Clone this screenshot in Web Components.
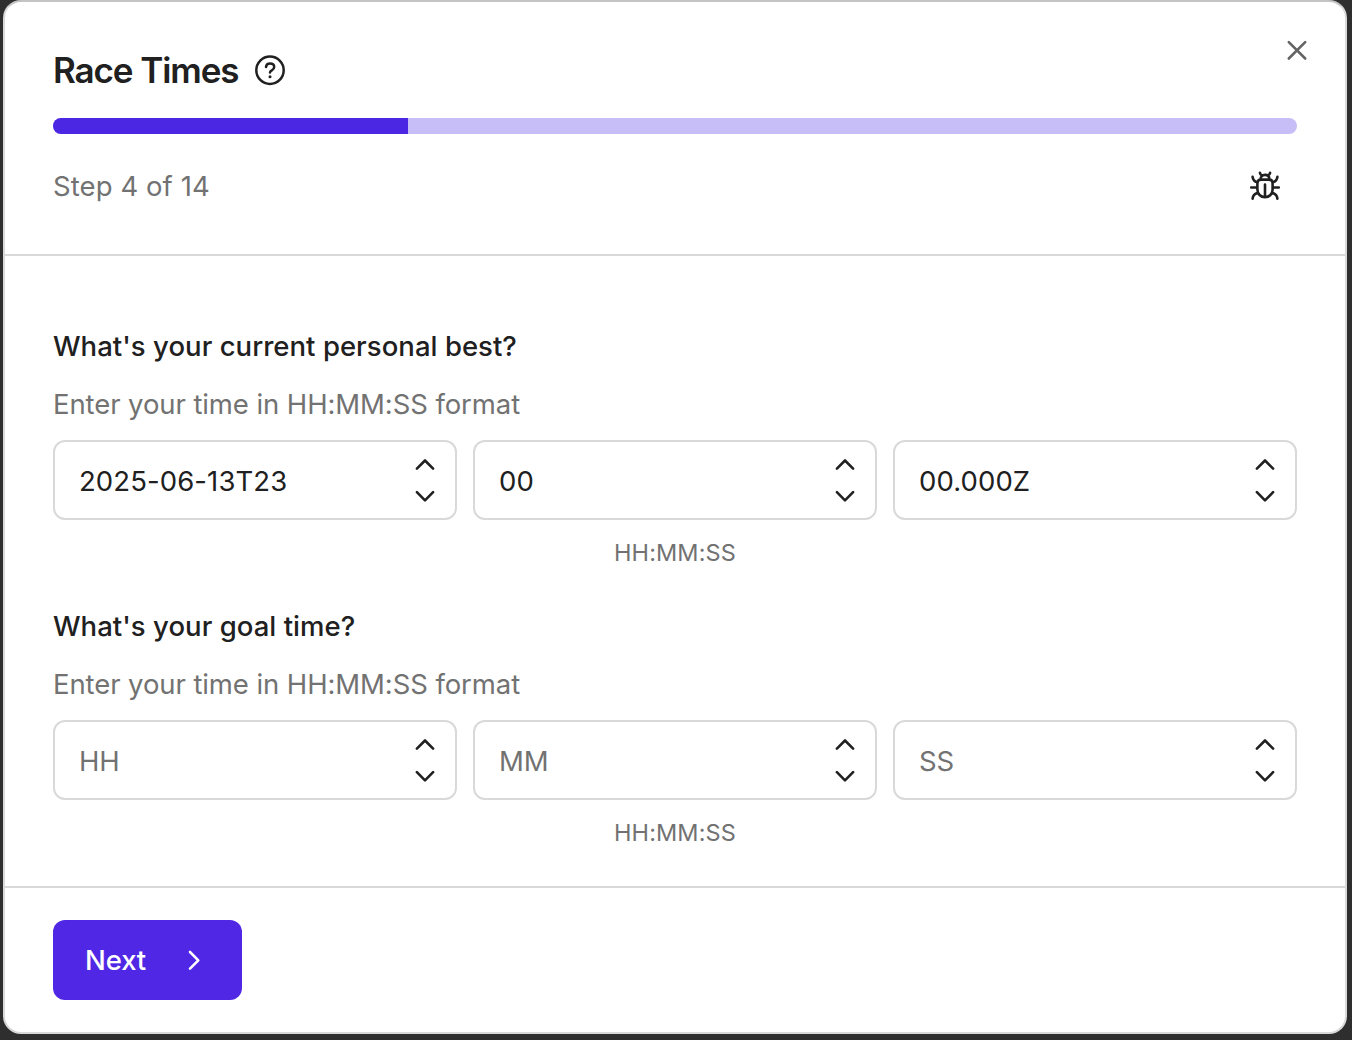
<!DOCTYPE html>
<html lang="en">
<head>
<meta charset="utf-8">
<title>Race Times</title>
<style>
body{margin:0;background:#2e2e2f;font-family:Inter,"Liberation Sans",sans-serif;color:#202020}
</style>
</head>
<body>
<step-dialog>
  <step-header slot="header" heading="Race Times" step="4" total="14"></step-header>
  <time-question label="What's your current personal best?" hours="2025-06-13T23" minutes="00" seconds="00.000Z"></time-question>
  <time-question label="What's your goal time?"></time-question>
  <next-button slot="footer">Next</next-button>
</step-dialog>
<script>
const define = (name, render) => customElements.define(name, class extends HTMLElement {
  connectedCallback() {
    if (this.shadowRoot) return;
    this.attachShadow({ mode: 'open' }).innerHTML = render(this);
  }
});

define('step-dialog', () => `
<style>
:host{display:flex;flex-direction:column;box-sizing:border-box;width:1344px;height:1034px;margin:0 0 6px 3px;border:2px solid #d9d9d9;border-top-color:#c4c4c4;border-radius:18px;background:#fff;overflow:hidden}
header{box-sizing:border-box;height:254px;padding:44px 48px 0;border-bottom:2px solid #d9d9d9}
main{flex:1;display:flex;flex-direction:column;gap:36px;padding:70px 48px 0}
footer{box-sizing:border-box;height:146px;padding:32px 48px;border-top:2px solid #d9d9d9}
</style>
<header><slot name="header"></slot></header>
<main><slot></slot></main>
<footer><slot name="footer"></slot></footer>`);

define('step-header', el => `
<style>
:host{display:block}
.title{display:flex;align-items:center;height:48px;gap:16px}
h1{margin:0;font-size:35px;line-height:48px;font-weight:600;letter-spacing:-1.1px;white-space:nowrap}
svg{display:block;flex:none}
.close{margin:-40px -24px 0 auto}
.bar{margin-top:24px;height:16px;border-radius:8px;background:#c8bef7;overflow:hidden}
.bar i{display:block;height:16px;background:#4b27e3}
.meta{display:flex;align-items:center;justify-content:space-between;height:48px;margin-top:28px;padding-right:16px}
.meta span{font-size:27.5px;letter-spacing:.08px;color:#727272}
</style>
<div class="title"><h1>${el.getAttribute('heading')}</h1>
<svg width="32" height="32" viewBox="0 0 32 32" fill="none" stroke="#202020" stroke-width="2.5" stroke-linecap="round"><circle cx="16" cy="16.3" r="13.7"/><path d="M12 13c.3-2 1.9-3.4 4-3.4 2.4 0 4.2 1.3 4.2 3.4 0 1.8-1.1 2.6-2.4 3.4-1.2.7-1.8 1.1-1.8 2.1"/><circle cx="16" cy="22.8" r="1.5" fill="#202020" stroke="none"/></svg>
<svg class="close" width="48" height="48" viewBox="0 0 48 48" fill="none" stroke="#646464" stroke-width="2.6" stroke-linecap="round"><path d="M15.8 16.1 32.2 32.5M32.2 16.1 15.8 32.5"/></svg></div>
<div class="bar"><i style="width:${el.getAttribute('step') / el.getAttribute('total') * 100}%"></i></div>
<div class="meta"><span>Step ${el.getAttribute('step')} of ${el.getAttribute('total')}</span>
<svg width="32" height="32" viewBox="0 0 32 32" fill="none" stroke="#202020" stroke-width="2.6" stroke-linecap="round" stroke-linejoin="round"><path d="M8.4 13.2Q8.4 9.6 12 9.6h8q3.6 0 3.6 3.6v6.2c0 4.6-3.2 7.8-7.6 7.8s-7.6-3.2-7.6-7.8zM11.6 9.4c0-2.7 1.8-4.5 4.4-4.5s4.4 1.8 4.4 4.5M16 14.5v12M10.9 2.8q.3 1.9 2.3 3M21.1 2.8q-.3 1.9-2.3 3M3.6 6.8q.4 4.3 4.8 5.5M28.4 6.8q-.4 4.3-4.8 5.5M2.2 17.5h6M23.8 17.5h6M3.6 28.6q.4-4.6 5.4-5.9M28.4 28.6q-.4-4.6-5.4-5.9"/></svg></div>`);

define('time-question', el => `
<style>
:host{display:block}
h2{margin:0;font-size:27.5px;line-height:40px;font-weight:500;letter-spacing:.04px}
p{margin:18px 0 16px;font-size:27.5px;line-height:40px;letter-spacing:-.09px;color:#727272}
.row{display:grid;grid-template-columns:repeat(3,1fr);gap:16px}
small{display:block;margin-top:16px;font-size:23.5px;line-height:34px;letter-spacing:.1px;text-align:center;color:#727272}
</style>
<h2>${el.getAttribute('label')}</h2>
<p>Enter your time in HH:MM:SS format</p>
<div class="row">
${[['hours','HH'],['minutes','MM'],['seconds','SS']].map(([k, hint]) => `<spin-field value="${el.getAttribute(k) || ''}" hint="${hint}"></spin-field>`).join('')}
</div>
<small>HH:MM:SS</small>`);

define('spin-field', el => `
<style>
:host{display:flex;align-items:center;justify-content:space-between;box-sizing:border-box;height:80px;padding:0 20px 0 24px;border:2px solid #d9d9d9;border-radius:12px;font-size:27.5px}
span{padding-top:2px;letter-spacing:.1px}
.hint{color:#727272;letter-spacing:-.1px}
svg{display:block}
</style>
${el.getAttribute('value') ? `<span>${el.getAttribute('value')}</span>` : `<span class="hint">${el.getAttribute('hint')}</span>`}
<svg width="20" height="48" viewBox="0 0 20 48" fill="none" stroke="#202020" stroke-width="2.6" stroke-linecap="round" stroke-linejoin="round"><path d="m1.9 12.6 8.1-8.1 8.1 8.1M1.9 36.2l8.1 8.1 8.1-8.1"/></svg>`);

define('next-button', () => `
<style>
:host{display:inline-flex;align-items:center;box-sizing:border-box;width:189px;height:80px;padding:0 40px 0 32px;justify-content:space-between;border-radius:12px;background:#4f27e5;color:#fff;font-size:27.5px;font-weight:500;letter-spacing:-.1px}
svg{display:block}
</style>
<slot></slot><svg width="14" height="22" viewBox="0 0 14 22" fill="none" stroke="#fff" stroke-width="2.6" stroke-linecap="round" stroke-linejoin="round"><path d="m2 3 8.3 8.3L2 19.6"/></svg>`);
</script>
</body>
</html>
